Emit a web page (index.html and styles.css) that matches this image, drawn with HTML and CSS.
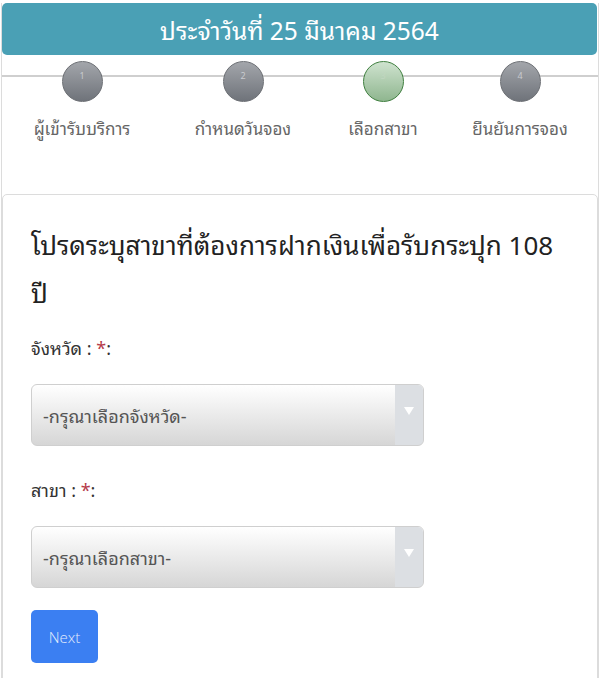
FILE: index.html
```html
<!DOCTYPE html>
<html lang="th">
<head>
    <meta charset="UTF-8">
    <meta name="viewport" content="width=device-width, initial-scale=1.0">
    <title>จองกระปุก 108 ปี</title>
    <link rel="stylesheet" href="styles.css">
</head>
<body>
    <div class="page">
        <div class="day-header">ประจำวันที่ 25 มีนาคม 2564</div>

        <div class="steps">
            <div class="step done">
                <div class="step-circle">1</div>
                <div class="step-label">ผู้เข้ารับบริการ</div>
            </div>
            <div class="step done">
                <div class="step-circle">2</div>
                <div class="step-label">กำหนดวันจอง</div>
            </div>
            <div class="step active">
                <div class="step-circle">3</div>
                <div class="step-label">เลือกสาขา</div>
            </div>
            <div class="step">
                <div class="step-circle">4</div>
                <div class="step-label">ยืนยันการจอง</div>
            </div>
        </div>

        <div class="form-card">
            <h2 class="form-title">โปรดระบุสาขาที่ต้องการฝากเงินเพื่อรับกระปุก 108 ปี</h2>

            <div class="form-group">
                <label class="form-label">จังหวัด : <span class="required">*</span>:</label>
                <div class="select-box">
                    <span class="select-text">-กรุณาเลือกจังหวัด-</span>
                    <span class="select-arrow"></span>
                </div>
            </div>

            <div class="form-group">
                <label class="form-label">สาขา : <span class="required">*</span>:</label>
                <div class="select-box">
                    <span class="select-text">-กรุณาเลือกสาขา-</span>
                    <span class="select-arrow"></span>
                </div>
            </div>

            <button class="btn-next">Next</button>
        </div>
    </div>
</body>
</html>
```

FILE: styles.css
```css
body {
    margin: 0;
    font-family: "Noto Sans Thai Looped", "Noto Serif Thai", "Noto Sans Thai", "Noto Sans", "DejaVu Sans", sans-serif;
    color: #333;
    background-color: #fff;
}
.page {
    margin: 0 1px;
    border-left: 1px solid #dcdcdc;
    border-right: 1px solid #dcdcdc;
    min-height: 678px;
    box-sizing: border-box;
}
.day-header {
    margin: 3px 1px 0 0;
    height: 52px;
    line-height: 52px;
    background-color: #4aa0b5;
    border-radius: 5px;
    color: #fff;
    font-size: 24.5px;
    text-align: center;
}
.steps {
    display: grid;
    grid-template-columns: 160px 162px 118px 156px;
    height: 139px;
    background: linear-gradient(#cfcfcf, #cfcfcf) no-repeat 0 20px / 100% 2px;
}
.step {
    display: flex;
    flex-direction: column;
    align-items: center;
}
.step-circle {
    width: 39px;
    height: 39px;
    margin-top: 6px;
    border-radius: 50%;
    border: 1px solid #6d7075;
    background: linear-gradient(#a3a6ab, #6f737a);
    color: #c9cbcf;
    font-size: 9px;
    text-align: center;
    line-height: 26px;
}
.step.active .step-circle {
    border-color: #3f7f3f;
    background: linear-gradient(#cfe3cf, #8fb68f);
    color: #c0d6c0;
}
.step-label {
    margin-top: 12px;
    font-size: 17px;
    color: #666;
}
.form-card {
    border: 1px solid #dcdcdc;
    border-radius: 5px;
    padding: 24px 28px 40px;
}
.form-title {
    margin: 0 0 18px;
    font-size: 26px;
    font-weight: normal;
    line-height: 48px;
    color: #222;
}
.form-group {
    margin-bottom: 29px;
}
.form-group:last-of-type {
    margin-bottom: 22px;
}
.form-label {
    display: block;
    font-size: 18px;
    color: #333;
    margin-bottom: 23px;
}
.required {
    color: #b53a4a;
}
.select-box {
    display: flex;
    width: 393px;
    height: 62px;
    box-sizing: border-box;
    border: 1px solid #cfcfcf;
    border-radius: 6px;
    overflow: hidden;
    background: linear-gradient(#ffffff, #d6d6d6);
}
.select-text {
    flex: 1;
    padding-left: 11px;
    line-height: 60px;
    font-size: 18px;
    color: #555;
}
.select-arrow {
    width: 28px;
    background-color: #dcdfe3;
    display: flex;
    justify-content: center;
    padding-top: 22px;
    box-sizing: border-box;
}
.select-arrow::after {
    content: "";
    width: 0;
    height: 0;
    border-left: 5px solid transparent;
    border-right: 5px solid transparent;
    border-top: 8px solid #fff;
}
.btn-next {
    width: 67px;
    height: 53px;
    border: none;
    border-radius: 5px;
    background-color: #3b7ff2;
    color: #e4edfc;
    font-family: "Open Sans", "Noto Sans", sans-serif;
    font-weight: 300;
    font-size: 15px;
    cursor: pointer;
}
```
